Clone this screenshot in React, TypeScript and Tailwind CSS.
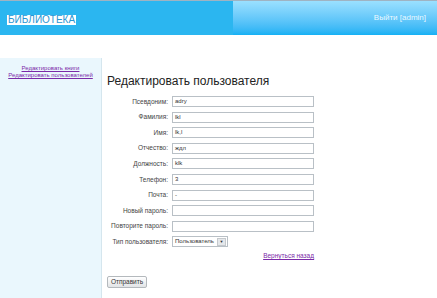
export default function App() {
  const rows: [string, string][] = [
    ["Псевдоним:", "adry"],
    ["Фамилия:", "lkl"],
    ["Имя:", "lk,l"],
    ["Отчество:", "ждл"],
    ["Должность:", "klk"],
    ["Телефон:", "3"],
    ["Почта:", "-"],
    ["Новый пароль:", ""],
    ["Повторите пароль:", ""],
  ];

  return (
    <div className="w-[437px] h-[298px] bg-white overflow-hidden flex flex-col font-['Liberation_Sans',Arial,sans-serif]">
      {/* Header */}
      <div className="h-[35px] flex border-t border-[#9fb3c2]">
        <div className="w-[233px] bg-[#2bb6f0] pt-[5px] pl-[7px]">
          <span className="bg-white text-[#2896d3] text-[10px] leading-[10px] px-[1px] inline-block">БИБЛИОТЕКА</span>
        </div>
        <div className="flex-1 bg-gradient-to-b from-[#9ae0ff] to-[#13b1f4] flex justify-end pr-[11px] pt-[13px]">
          <span className="text-[#eaf8ff] text-[8px] leading-[8px]">Выйти [admin]</span>
        </div>
      </div>

      <div className="h-[23px]" />

      <div className="flex flex-1">
        {/* Sidebar */}
        <div className="w-[102px] bg-[#eaf7fd] border-r border-[#d5e6ee] pt-[7px] flex flex-col items-center text-[6px] leading-[7px]">
          <a className="text-[#7b2aa8] underline">Редактировать книги</a>
          <a className="text-[#7b2aa8] underline">Редактировать пользователей</a>
        </div>

        {/* Content */}
        <div className="flex-1 pl-[5px] pt-[16px]">
          <h1 className="text-[12px] leading-[14px] text-[#222]">Редактировать пользователя</h1>
          <div className="pt-[8px] flex flex-col gap-[4.6px]">
            {rows.map(([label, value]) => (
              <div key={label} className="flex items-center">
                <div className="w-[65px] text-right text-[6.5px] text-[#444] pr-[4px]">{label}</div>
                <div className="w-[142px] h-[11px] border border-[#b9c0c6] text-[6px] leading-[9px] text-[#333] pl-[2px] bg-white">
                  {value}
                </div>
              </div>
            ))}
            <div className="flex items-center">
              <div className="w-[65px] text-right text-[6.5px] text-[#444] pr-[4px] whitespace-nowrap">Тип пользователя:</div>
              <div className="w-[56px] h-[11px] border border-[#b9c0c6] text-[6px] leading-[9px] text-[#333] pl-[2px] flex justify-between items-center">
                <span>Пользователь</span>
                <span className="w-[9px] h-[8px] mr-[1px] bg-[#e5e8eb] border border-[#c5c9cd] flex items-center justify-center text-[4px] text-[#333]">▼</span>
              </div>
            </div>
          </div>
          <div className="w-[207px] flex justify-end pt-[4px]">
            <a className="text-[#7b2aa8] underline text-[6.5px]">Вернуться назад</a>
          </div>
          <div className="pt-[6px]">
            <button className="w-[40px] h-[12px] border border-[#b4b9bd] rounded-[2px] bg-gradient-to-b from-white to-[#e2e4e6] text-[6.5px] leading-[10px] text-[#333]">
              Отправить
            </button>
          </div>
        </div>
      </div>
    </div>
  );
}
